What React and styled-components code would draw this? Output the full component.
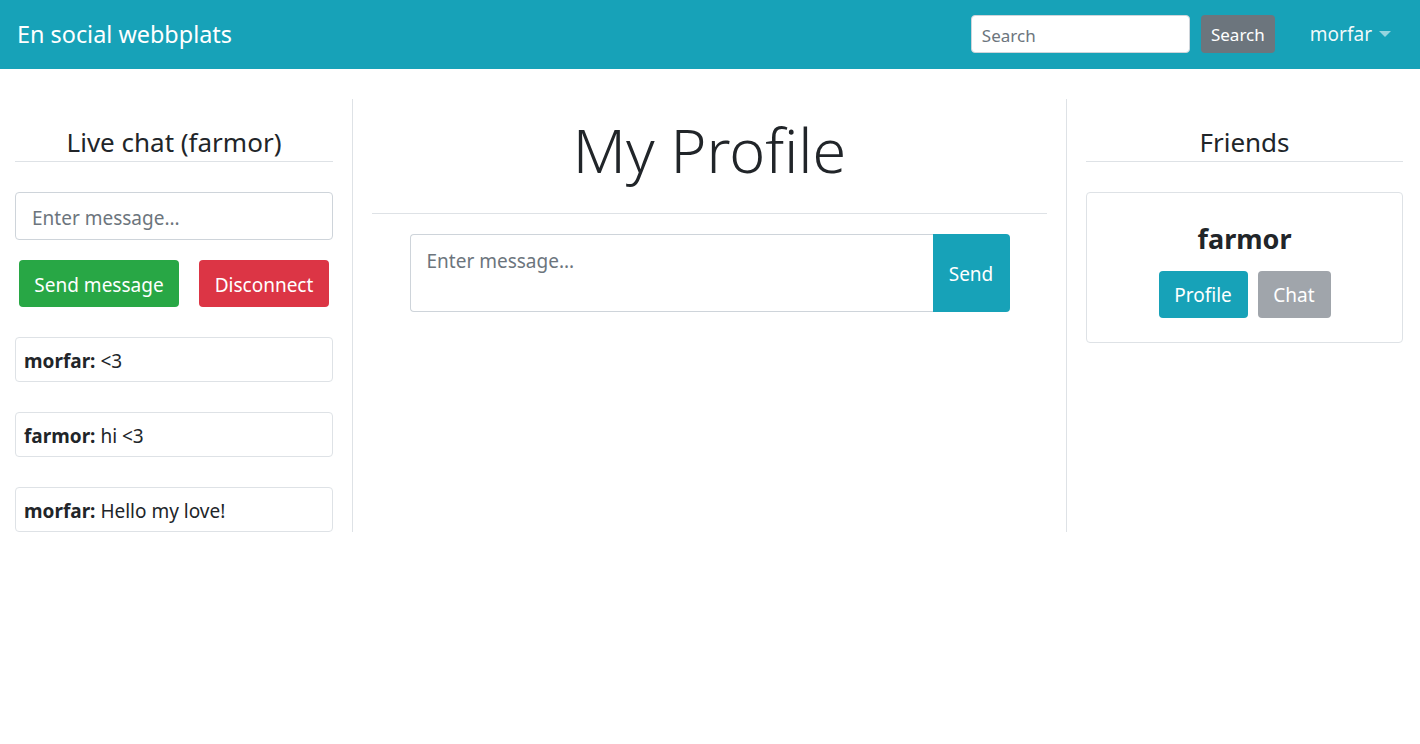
import React from "react";
import styled, { createGlobalStyle } from "styled-components";

const Global = createGlobalStyle`
  * { box-sizing: border-box; }
  body {
    margin: 0;
    font-family: "Noto Sans", "Open Sans", sans-serif;
    font-size: 20px;
    line-height: 1.5;
    color: #212529;
    background: #fff;
  }
`;

const Nav = styled.nav`
  height: 69px;
  background: #17a2b8;
  display: flex;
  align-items: center;
  padding: 0 29px 0 17px;
`;

const Brand = styled.a`
  font-size: 23.4px;
  color: #fff;
  text-decoration: none;
  flex: 1;
  margin-top: 1px;
`;

const SearchForm = styled.form`
  display: flex;
  align-items: center;
  gap: 11px;
  margin-right: 35px;
  margin-top: -1px;
`;

const SearchInput = styled.input`
  width: 219px;
  height: 38px;
  border: 1px solid #ced4da;
  border-radius: 4px;
  padding: 2px 10px 0;
  font: inherit;
  font-size: 17px;
  color: #495057;
  &::placeholder { color: #6c757d; }
`;

const NavButton = styled.button`
  width: 74px;
  height: 38px;
  padding: 1px 0 0;
  border: none;
  border-radius: 4px;
  background: #6c757d;
  color: #fff;
  font: inherit;
  font-size: 17px;
`;

const UserMenu = styled.a`
  display: flex;
  align-items: center;
  gap: 7px;
  color: rgba(255, 255, 255, 0.95);
  font-size: 19px;
  &::after {
    content: "";
    border-top: 6px solid rgba(255, 255, 255, 0.55);
    border-left: 6px solid transparent;
    border-right: 6px solid transparent;
    margin-top: -2px;
  }
`;

const Main = styled.main`
  display: grid;
  grid-template-columns: 338px 714px 1fr;
  margin-top: 30px;
  padding: 0 17px 0 15px;
  min-height: 432px;
`;

const Column = styled.section`
  padding: ${(p) => p.$pad};
  border-right: ${(p) => (p.$border ? "1px solid #dee2e6" : "none")};
  display: flex;
  flex-direction: column;
`;

const SideTitle = styled.h4`
  margin: 28px 0 30px;
  font-size: 26px;
  font-weight: 400;
  line-height: 1.2;
  text-align: center;
  padding-bottom: 3px;
  border-bottom: 1px solid #dee2e6;
`;

const TextInput = styled.input`
  height: 48px;
  width: 100%;
  border: 1px solid #ced4da;
  border-radius: 4px;
  padding: 3px 16px 0;
  font: inherit;
  font-size: 19px;
  &::placeholder { color: #6c757d; }
`;

const ActionRow = styled.div`
  display: flex;
  gap: 20px;
  padding: 0 4px;
  margin: 20px 0 30px;
`;

const Button = styled.button`
  flex: none;
  height: 47px;
  width: ${(p) => p.$w}px;
  padding: 3px 0 0;
  white-space: nowrap;
  border: none;
  border-radius: 4px;
  background: ${(p) => p.$bg};
  color: #fff;
  font: inherit;
  font-size: 19px;
  line-height: 1;
`;

const Message = styled.div`
  height: 45px;
  border: 1px solid #dee2e6;
  border-radius: 4px;
  padding: 3px 8px 0;
  display: flex;
  align-items: center;
  font-size: 19px;
  margin-bottom: 30px;
  white-space: pre;
  &:last-child { margin-bottom: 0; }
  b { font-weight: 700; }
`;

const Heading = styled.h1`
  margin: 14px 0 0;
  font-size: 61px;
  font-weight: 300;
  line-height: 1.2;
  text-align: center;
  padding-bottom: 27px;
  border-bottom: 1px solid #dee2e6;
`;

const PostGroup = styled.div`
  width: 600px;
  margin: 20px auto 0;
  display: flex;
  height: 78px;
`;

const PostArea = styled.textarea`
  flex: 1;
  border: 1px solid #ced4da;
  border-right: none;
  border-radius: 4px 0 0 4px;
  padding: 12px 16px 8px;
  font: inherit;
  font-size: 19px;
  line-height: 1.5;
  resize: none;
  &::placeholder { color: #6c757d; }
`;

const PostButton = styled.button`
  width: 77px;
  border: none;
  border-radius: 0 4px 4px 0;
  padding: 3px 0 0;
  background: #17a2b8;
  color: #fff;
  font: inherit;
  font-size: 19px;
`;

const FriendCard = styled.div`
  border: 1px solid #dee2e6;
  border-radius: 4px;
  height: 151px;
  display: flex;
  flex-direction: column;
  align-items: center;
  padding-top: 30px;
`;

const FriendName = styled.div`
  font-size: 27px;
  font-weight: 700;
  line-height: 1.2;
  margin-bottom: 15px;
`;

const ButtonRow = styled.div`
  display: flex;
  gap: 10px;
`;

export default function App() {
  return (
    <>
      <Global />
      <Nav>
        <Brand>En social webbplats</Brand>
        <SearchForm onSubmit={(e) => e.preventDefault()}>
          <SearchInput placeholder="Search" />
          <NavButton>Search</NavButton>
        </SearchForm>
        <UserMenu>morfar</UserMenu>
      </Nav>
      <Main>
        <Column $pad="0 19px 0 0" $border>
          <SideTitle>Live chat (farmor)</SideTitle>
          <TextInput placeholder="Enter message..." />
          <ActionRow>
            <Button $bg="#28a745" $w={160}>Send message</Button>
            <Button $bg="#dc3545" $w={130}>Disconnect</Button>
          </ActionRow>
          <Message><b>morfar:</b> &lt;3</Message>
          <Message><b>farmor:</b> hi &lt;3</Message>
          <Message><b>morfar:</b> Hello my love!</Message>
        </Column>
        <Column $pad="0 19px" $border>
          <Heading>My Profile</Heading>
          <PostGroup>
            <PostArea placeholder="Enter message..." />
            <PostButton>Send</PostButton>
          </PostGroup>
        </Column>
        <Column $pad="0 0 0 19px">
          <SideTitle>Friends</SideTitle>
          <FriendCard>
            <FriendName>farmor</FriendName>
            <ButtonRow>
              <Button $bg="#17a2b8" $w={89}>Profile</Button>
              <Button $bg="#a0a5ab" $w={73}>Chat</Button>
            </ButtonRow>
          </FriendCard>
        </Column>
      </Main>
    </>
  );
}
